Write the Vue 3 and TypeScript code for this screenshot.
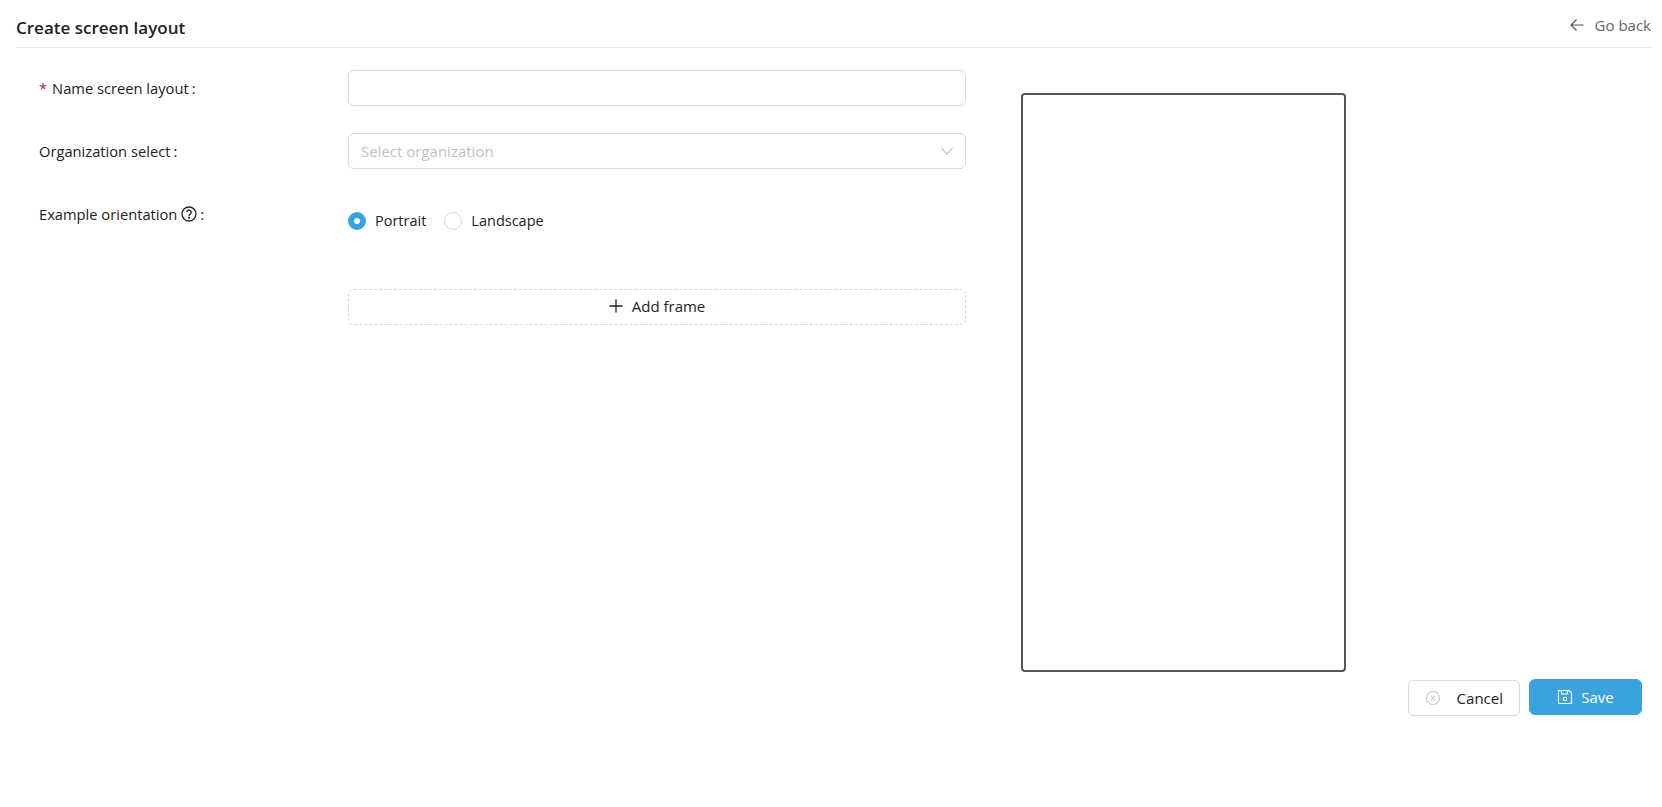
<script setup lang="ts">
const title: string = 'Create screen layout'
</script>

<template>
  <div class="page">
    <header class="head">
      <h1 class="title">{{ title }}</h1>
      <a class="back">
        <svg class="back-ico" viewBox="0 0 16 16" width="16" height="16" fill="none" stroke="#555" stroke-width="1.2">
          <path d="M14.5 8H2M7.5 2.5 2 8l5.5 5.5" />
        </svg>
        <span>Go back</span>
      </a>
    </header>
    <div class="content">
      <div class="form">
        <div class="row row-first">
          <label class="lab"><span class="req">*</span>Name screen layout<span class="colon">:</span></label>
          <div class="field"></div>
        </div>
        <div class="row">
          <label class="lab">Organization select<span class="colon">:</span></label>
          <div class="field select">
            <span class="ph">Select organization</span>
            <svg viewBox="0 0 14 14" width="14" height="14" fill="none" stroke="#bdbdbd" stroke-width="1.1">
              <path d="M1.5 4.2 7 10.2l5.5-6" />
            </svg>
          </div>
        </div>
        <div class="row row-radio">
          <label class="lab">Example orientation
            <svg class="help" viewBox="0 0 16 16" width="16" height="16" fill="none" stroke="#222" stroke-width="1.3">
              <circle cx="8" cy="8" r="7" />
              <path d="M5.8 6.3a2.2 2.2 0 1 1 3.4 1.8C8.4 8.6 8 9 8 9.9" />
              <circle cx="8" cy="11.8" r=".5" fill="#222" />
            </svg><span class="colon">:</span>
          </label>
          <div class="radios">
            <span class="radio"><i class="dot on"></i>Portrait</span>
            <span class="radio"><i class="dot"></i>Landscape</span>
          </div>
        </div>
        <div class="row row-add">
          <div class="lab"></div>
          <button class="add" type="button">
            <svg viewBox="0 0 14 14" width="14" height="14" fill="none" stroke="#222" stroke-width="1.3">
              <path d="M7 .5v13M.5 7h13" />
            </svg>
            Add frame
          </button>
        </div>
      </div>
      <div class="side">
        <div class="preview"></div>
      </div>
    </div>
    <footer class="actions">
      <button class="btn cancel" type="button">
        <svg viewBox="0 0 16 16" width="16" height="16" fill="none" stroke="#c9c9c9" stroke-width="1.1">
          <circle cx="8" cy="8" r="6.5" />
          <path d="m5.8 5.8 4.4 4.4m0-4.4-4.4 4.4" />
        </svg>
        <span>Cancel</span>
      </button>
      <button class="btn save" type="button">
        <svg viewBox="0 0 16 16" width="16" height="16" fill="none" stroke="#fff" stroke-width="1.1">
          <path d="M2 1.5h10l2.5 2.5v10.5h-13v-13z" />
          <path d="M4.5 1.5v3.5h6v-3.5" />
          <circle cx="8" cy="10" r="1.7" />
        </svg>
        <span>Save</span>
      </button>
    </footer>
  </div>
</template>

<style scoped>
.page {
  width: 1662px;
  height: 807px;
  box-sizing: border-box;
  padding: 0 11px 0 16px;
  background: #fff;
  font-family: "Open Sans", "Noto Sans", sans-serif;
  font-size: 14.7px;
  color: #222;
  overflow: hidden;
}
.head {
  height: 48px;
  box-sizing: border-box;
  border-bottom: 1px solid #e8e8e8;
  display: flex;
  justify-content: space-between;
  align-items: center;
}
.title {
  margin: 8px 0 0;
  font-size: 17px;
  font-weight: 600;
  color: #222;
}
.back {
  display: flex;
  align-items: center;
  gap: 10px;
  color: #666;
  font-size: 15px;
  margin-top: 2px;
}
.content {
  display: flex;
  height: 631px;
}
.form {
  width: 950px;
  padding-top: 22px;
}
.row {
  display: flex;
  align-items: center;
  height: 36px;
  margin-bottom: 27px;
  padding-left: 23px;
}
.lab {
  width: 309px;
  flex: none;
  display: flex;
  align-items: center;
}
.req {
  color: #c8102e;
  margin-right: 5px;
}
.colon {
  margin-left: 3px;
}
.help {
  margin-left: 4px;
}
.field {
  width: 618px;
  height: 36px;
  box-sizing: border-box;
  border: 1px solid #d9d9d9;
  border-radius: 6px;
}
.select {
  display: flex;
  align-items: center;
  justify-content: space-between;
  padding: 0 11px 0 12px;
}
.ph {
  color: #bfbfbf;
  font-size: 15px;
}
.row-radio {
  align-items: flex-start;
  margin-bottom: 0;
  height: 93px;
}
.row-radio .lab {
  height: 36px;
}
.radios {
  display: flex;
  gap: 18px;
  padding-top: 15px;
  font-size: 14.5px;
}
.radio {
  display: flex;
  align-items: center;
  gap: 9px;
  line-height: 19px;
}
.dot {
  width: 18px;
  height: 18px;
  box-sizing: border-box;
  border: 1px solid #d9d9d9;
  border-radius: 50%;
  background: #fff;
}
.dot.on {
  border: 6px solid #3aa3de;
}
.add {
  width: 618px;
  height: 36px;
  padding: 0 0 2px;
  border: 1px dashed #d9d9d9;
  border-radius: 6px;
  background: #fff;
  font: inherit;
  font-size: 15px;
  color: #222;
  display: flex;
  align-items: center;
  justify-content: center;
  gap: 9px;
}
.side {
  padding: 45px 0 0 55px;
}
.preview {
  width: 325px;
  height: 579px;
  box-sizing: border-box;
  border: 2px solid #555;
  border-radius: 4px;
}
.actions {
  display: flex;
  justify-content: flex-end;
  align-items: flex-start;
  gap: 9px;
  padding-right: 9px;
}
.btn {
  height: 36px;
  border-radius: 6px;
  font: inherit;
  font-size: 15px;
  display: flex;
  align-items: center;
}
.cancel {
  width: 112px;
  margin-top: 1px;
  padding: 0 16px;
  justify-content: space-between;
  background: #fff;
  border: 1px solid #d9d9d9;
  color: #222;
  box-shadow: 0 2px 0 rgba(0, 0, 0, 0.02);
}
.save {
  width: 113px;
  justify-content: center;
  gap: 8px;
  background: #3aa3de;
  border: 1px solid #3aa3de;
  color: #fff;
}
</style>
